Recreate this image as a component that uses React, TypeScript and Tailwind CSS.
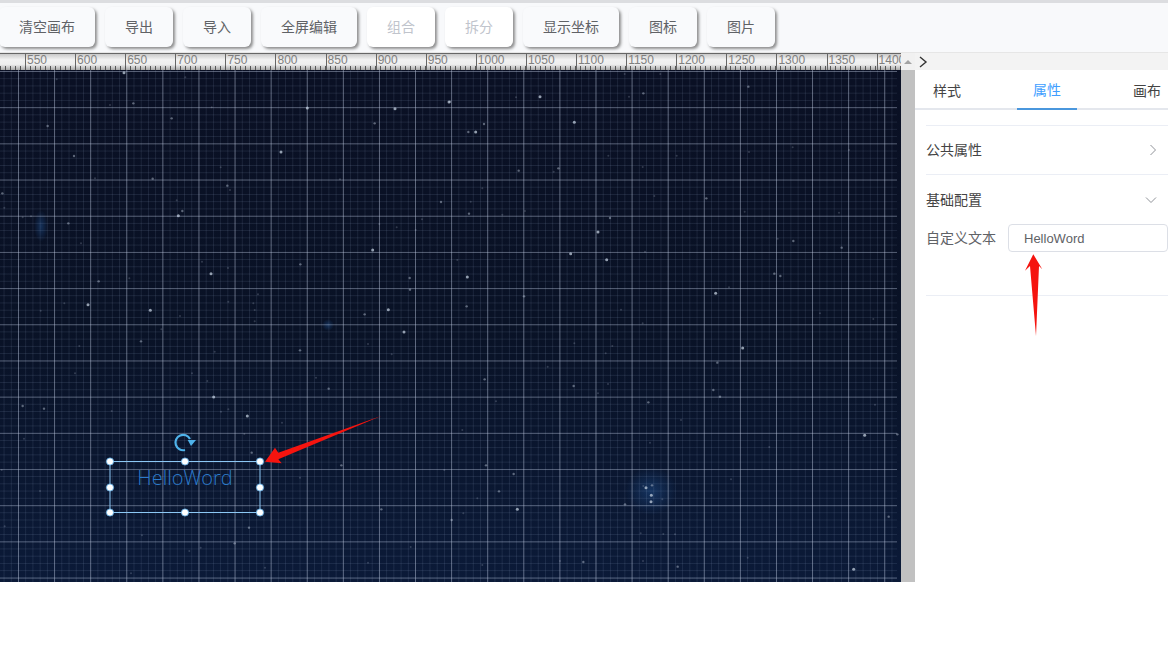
const cjk = "font-['Liberation_Sans','Noto_Sans_CJK_SC',sans-serif]";

const buttons = [
  { label: '清空画布', wide: true },
  { label: '导出' },
  { label: '导入' },
  { label: '全屏编辑', wide: true },
  { label: '组合', disabled: true },
  { label: '拆分', disabled: true },
  { label: '显示坐标', wide: true },
  { label: '图标' },
  { label: '图片' },
];

const rulerMarks = Array.from({ length: 18 }, (_, i) => 550 + i * 50);

// star positions read off 3x crops: [x, y, brightness], one list per quadrant
const q1 = [[372,8,3],[170,28,1],[556,22,1],[143,168,2],[400,100,2],[330,105,1],[515,145,2],[635,112,1],[922,114,3],[1185,116,3],[1347,96,3],[1124,160,2],[843,246,3],[222,258,2],[285,325,1],[458,326,2],[662,292,1],[682,347,2],[690,360,1],[1020,328,1],[7,370,2],[13,413,1],[1323,396,2],[530,391,1],[547,423,2],[535,437,3],[205,460,2],[68,442,1],[93,439,1],[1266,448,1],[1190,472,1],[1138,462,1],[1247,480,1],[1118,540,3],[243,520,1],[901,583,2],[633,611,3],[684,594,1],[606,575,1],[1229,624,2],[1230,659,2],[296,634,2],[388,625,1],[774,673,1],[193,700,1],[264,704,3],[451,721,3],[1165,719,3],[1094,733,2],[764,720,1],[764,754,1],[540,738,1],[760,700,1],[685,695,1],[122,722,1]];
const q2 = [[0,95,2],[270,80,3],[198,82,1],[580,70,2],[537,80,1],[524,12,1],[631,12,1],[895,50,2],[102,162,2],[373,157,3],[55,186,2],[77,186,3],[475,257,1],[680,257,1],[897,246,1],[1028,232,1],[1197,240,1],[206,302,2],[325,295,2],[311,305,1],[578,291,1],[97,355,1],[613,378,1],[769,385,2],[62,395,1],[57,431,2],[157,434,1],[225,423,1],[480,444,2],[884,425,1],[1167,428,1],[444,486,3],[983,506,1],[1030,513,2],[1175,533,2],[362,551,3],[470,569,3],[585,545,1],[22,570,1],[52,621,3],[973,611,2],[991,618,2],[222,679,2],[797,670,3],[837,652,1],[50,709,2],[513,719,1],[1270,747,1],[578,760,1],[1110,730,1]];
const q3 = [[484,10,1],[1212,18,3],[423,46,2],[238,60,1],[644,77,1],[900,73,2],[1104,54,1],[1175,85,1],[576,142,1],[225,142,1],[622,165,1],[948,155,1],[986,188,2],[641,213,3],[68,240,2],[132,248,2],[335,255,1],[663,257,1],[685,250,1],[742,270,3],[846,290,1],[733,324,1],[72,338,1],[755,380,2],[1024,418,2],[1333,432,1],[5,432,1],[900,455,1],[120,495,1],[1144,550,2],[14,601,1],[747,605,2],[426,628,1],[704,652,2],[602,665,1],[1232,663,1],[1104,710,1],[795,725,1],[393,742,1],[568,675,1]];
const q4 = [[878,66,3],[373,52,1],[487,60,1],[467,82,1],[802,110,2],[293,122,1],[104,160,2],[371,180,2],[474,174,1],[790,192,2],[810,212,2],[444,202,1],[595,229,2],[138,226,1],[1275,236,1],[693,282,1],[37,312,1],[1244,328,3],[1342,325,2],[600,350,1],[958,363,1],[108,418,2],[191,444,2],[147,496,2],[843,460,1],[82,517,1],[202,550,3],[525,535,2],[40,562,1],[5,582,2],[1316,572,2],[572,622,1],[640,624,1],[675,625,1],[330,705,1],[400,708,2],[579,705,1],[683,722,2],[1211,730,3],[97,717,1],[893,695,1],[588,485,3],[606,478,2],[604,508,3],[603,527,3],[580,480,1],[637,520,1]];

const stars = [
  ...q1.map(([x, y, b]) => [x / 3, y / 3, b]),
  ...q2.map(([x, y, b]) => [450 + x / 3, y / 3, b]),
  ...q3.map(([x, y, b]) => [x / 3, 256 + y / 3, b]),
  ...q4.map(([x, y, b]) => [450 + x / 3, 256 + y / 3, b]),
];

const handles = [
  [110, 391], [185, 391], [260, 391],
  [110, 417], [260, 417],
  [110, 442], [185, 442], [260, 442],
];

function Toolbar() {
  return (
    <div className="flex h-[49px] items-start gap-[10px] bg-[#f8f9fb] pt-1">
      {buttons.map((b, i) => (
        <button
          key={b.label}
          className={`flex h-10 items-center justify-center rounded-md text-sm shadow-[2px_2px_3px_rgba(70,70,70,0.6)] ${
            b.wide ? 'w-24' : 'w-[68px]'
          } ${b.disabled ? 'bg-white text-[#c0c4cc]' : 'bg-[#f9fafc] text-[#606266]'} ${i === 0 ? '-ml-px' : ''}`}
        >
          {b.label}
        </button>
      ))}
    </div>
  );
}

function Ruler() {
  return (
    <div className="relative flex h-[17px] overflow-hidden border-t border-[#666] bg-[linear-gradient(to_bottom,#c9c9c9,#f2f2f2_35%,#eeeeee_65%,#a8a8a8)] pl-[25px]">
      {rulerMarks.map((n) => (
        <div key={n} className="h-full w-[50.1px] shrink-0 border-l border-[#666] pl-px text-xs leading-[13px] text-[#808080]">
          {n}
        </div>
      ))}
      <div className="absolute inset-x-0 bottom-0 h-1 bg-[linear-gradient(to_right,#555_1px,transparent_1px)] bg-[size:5.01px_100%]" />
    </div>
  );
}

function Canvas() {
  return (
    <div className="relative h-[512px] overflow-hidden bg-[linear-gradient(to_bottom,#0a1024,#091226_50%,#0b1a38)]">
      <svg className="absolute inset-0 blur-[0.5px]" width="901" height="512">
        <defs>
          <radialGradient id="haze">
            <stop offset="0%" stopColor="#2a6ab8" stopOpacity="0.35" />
            <stop offset="100%" stopColor="#2a6ab8" stopOpacity="0" />
          </radialGradient>
        </defs>
        <ellipse cx="41" cy="156" rx="7" ry="16" fill="url(#haze)" />
        <circle cx="328" cy="255" r="6" fill="url(#haze)" />
        <ellipse cx="651" cy="421" rx="26" ry="24" fill="url(#haze)" />
        {stars.map(([x, y, b], i) => (
          <circle
            key={i}
            cx={x}
            cy={y}
            r={b === 3 ? 1.5 : b === 2 ? 1.2 : 1}
            fill="#c3cfde"
            opacity={b === 3 ? 0.75 : b === 2 ? 0.45 : 0.22}
          />
        ))}
      </svg>
      {/* grid */}
      <div className="absolute inset-y-0 left-0 w-[897px] bg-[linear-gradient(to_right,rgba(205,215,235,0.38)_1px,transparent_1px),linear-gradient(to_bottom,rgba(205,215,235,0.33)_1px,transparent_1px),linear-gradient(to_right,rgba(170,190,225,0.12)_1px,transparent_1px),linear-gradient(to_bottom,rgba(170,190,225,0.12)_1px,transparent_1px)] bg-[size:36.1px_36.2px,36.1px_36.2px,7.22px_7.24px,7.22px_7.24px] bg-[position:18px_1px,18px_1px,3.6px_1px,3.6px_1px]" />
      <div className="absolute left-[110px] top-[391px] flex h-[34px] w-[150px] items-center justify-center font-['Open_Sans',sans-serif] text-xl font-light text-[#2b7bcc]">
        HelloWord
      </div>
      <svg className="absolute inset-0" width="901" height="512">
        <rect x="110" y="391.5" width="150" height="51" fill="none" stroke="#8cc8f5" strokeWidth="1" />
        {handles.map(([x, y]) => (
          <circle key={`${x}-${y}`} cx={x} cy={y + 0.5} r="3.6" fill="#fff" stroke="#5eaee8" strokeWidth="0.8" />
        ))}
        <path d="M185 380A7.7 7.7 0 1 1 190 369" fill="none" stroke="#4fb3ea" strokeWidth="2.2" />
        <path d="M187.7 370h8.3l-5 6z" fill="#4fb3ea" />
        <polygon points="381.7,345.7 278.3,382.7 275,377.7 265,391.7 281.7,393.3 278.3,389.3" fill="#f5140f" />
      </svg>
    </div>
  );
}

function SidePanel() {
  return (
    <div className="relative flex w-[253px] shrink-0 flex-col overflow-hidden text-sm">
      <div className="flex h-[17px] items-center bg-[#f3f3f3] pl-[3px]">
        <svg width="10" height="12" viewBox="0 0 10 12">
          <path d="M2 1l6 5-6 5" fill="none" stroke="#333" strokeWidth="1.4" />
        </svg>
      </div>
      <div className="flex h-10 border-b-2 border-[#e4e7ed]">
        <div className="flex h-10 w-[64px] shrink-0 items-center justify-center pt-[2px] text-[#444]">样式</div>
        <div className="ml-[38px] flex h-10 w-[60px] shrink-0 items-center justify-center border-b-2 border-[#4a97dd] pt-[2px] text-[#409eff]">属性</div>
        <div className="ml-[40px] flex h-10 w-[60px] shrink-0 items-center justify-center pt-[2px] text-[#444]">画布</div>
      </div>
      <div className="pl-[11px]">
        <div className="mt-[15px] border-t border-[#ebeef5]" />
        <div className="flex h-[49px] items-center justify-between border-b border-[#ebeef5] pr-[11px] text-[#444]">
          公共属性
          <svg width="8" height="12" viewBox="0 0 8 12">
            <path d="M1.5 1l5 5-5 5" fill="none" stroke="#909399" strokeWidth="1" />
          </svg>
        </div>
        <div className="flex h-[49px] items-center justify-between pr-[11px] text-[#444]">
          基础配置
          <svg width="12" height="8" viewBox="0 0 12 8">
            <path d="M1 1.5l5 5 5-5" fill="none" stroke="#909399" strokeWidth="1" />
          </svg>
        </div>
        <div className="flex items-center gap-3 text-[#606266]">
          自定义文本
          <input
            readOnly
            value="HelloWord"
            className="h-7 w-40 rounded border border-[#dcdfe6] pl-[15px] text-[13px] text-[#606266]"
          />
        </div>
        <div className="mt-[43px] border-t border-[#ebeef5]" />
      </div>
      <svg className="absolute left-[100px] top-[200px]" width="40" height="90">
        <polygon points="18.3,1.3 10,17.7 15,13 21,83 24,13 27.3,16.3" fill="#f5140f" />
      </svg>
    </div>
  );
}

export default function App() {
  return (
    <div className={`flex h-[648px] w-[1168px] flex-col overflow-hidden bg-white ${cjk}`}>
      <div className="h-[3px] bg-[#dcdde0]" />
      <Toolbar />
      <div className="h-px bg-[#e6e6e6]" />
      <div className="flex">
        <div className="flex w-[901px] shrink-0 flex-col">
          <Ruler />
          <Canvas />
        </div>
        <div className="flex w-[14px] shrink-0 flex-col">
          <div className="flex h-[17px] items-center justify-center bg-[#f1f1f1]">
            <div className="h-0 w-0 border-x-[4px] border-b-[4px] border-x-transparent border-b-[#a3a3a3]" />
          </div>
          <div className="flex-1 bg-[#c1c1c1]" />
        </div>
        <SidePanel />
      </div>
    </div>
  );
}
